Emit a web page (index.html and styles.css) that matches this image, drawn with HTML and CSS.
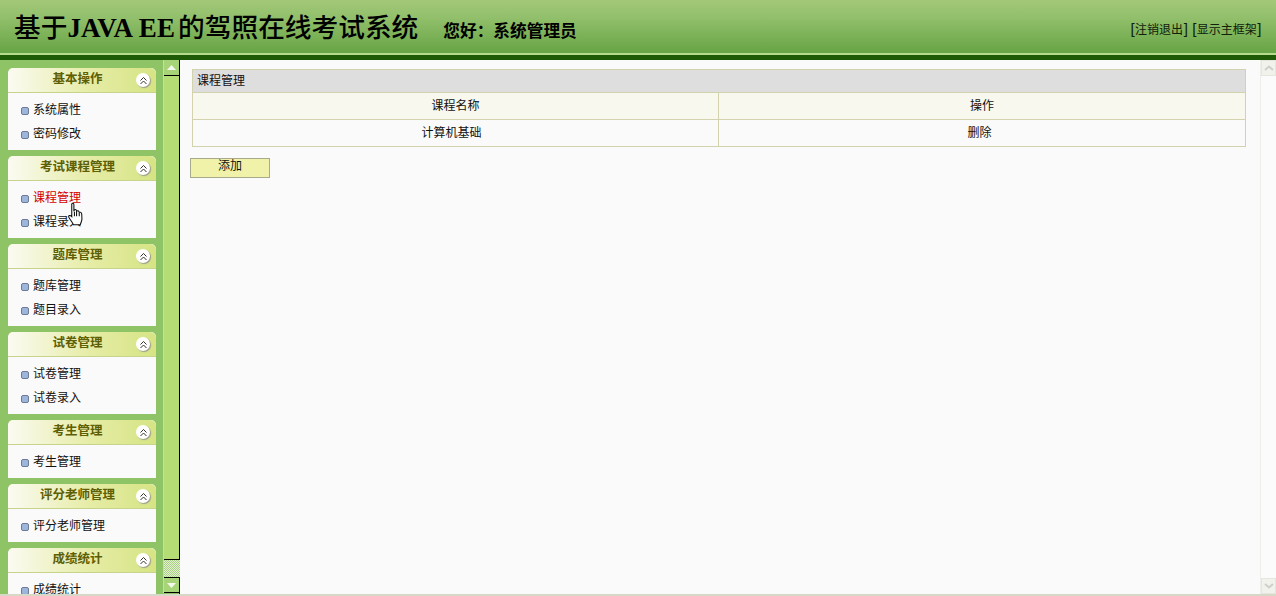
FILE: index.html
```html
<!DOCTYPE html>
<html lang="zh-CN">
<head>
    <meta charset="UTF-8">
    <title>基于JAVA EE的驾照在线考试系统</title>
    <link rel="stylesheet" href="styles.css">
</head>
<body>
    <div class="header">
        <div class="title">基于<span class="title-latin">JAVA EE</span>的驾照在线考试系统</div>
        <div class="welcome">您好：系统管理员</div>
        <div class="top-links"><span class="bracket">[</span>注销退出<span class="bracket">]</span> <span class="bracket">[</span>显示主框架<span class="bracket">]</span></div>
    </div>
    <div class="page">
        <div class="sidebar">
            <div class="menu">
                <div class="panel">
                    <div class="panel-head"><span class="panel-title">基本操作</span><span class="toggle"><svg width="9" height="9" viewBox="0 0 9 9"><path d="M1.5 4.5 4.5 1.5 7.5 4.5M1.5 8 4.5 5 7.5 8" fill="none" stroke="#333" stroke-width="1"/></svg></span></div>
                    <div class="panel-body">
                        <div class="item">系统属性</div>
                        <div class="item">密码修改</div>
                    </div>
                </div>
                <div class="panel">
                    <div class="panel-head"><span class="panel-title">考试课程管理</span><span class="toggle"><svg width="9" height="9" viewBox="0 0 9 9"><path d="M1.5 4.5 4.5 1.5 7.5 4.5M1.5 8 4.5 5 7.5 8" fill="none" stroke="#333" stroke-width="1"/></svg></span></div>
                    <div class="panel-body">
                        <div class="item active">课程管理</div>
                        <div class="item">课程录入</div>
                    </div>
                </div>
                <div class="panel">
                    <div class="panel-head"><span class="panel-title">题库管理</span><span class="toggle"><svg width="9" height="9" viewBox="0 0 9 9"><path d="M1.5 4.5 4.5 1.5 7.5 4.5M1.5 8 4.5 5 7.5 8" fill="none" stroke="#333" stroke-width="1"/></svg></span></div>
                    <div class="panel-body">
                        <div class="item">题库管理</div>
                        <div class="item">题目录入</div>
                    </div>
                </div>
                <div class="panel">
                    <div class="panel-head"><span class="panel-title">试卷管理</span><span class="toggle"><svg width="9" height="9" viewBox="0 0 9 9"><path d="M1.5 4.5 4.5 1.5 7.5 4.5M1.5 8 4.5 5 7.5 8" fill="none" stroke="#333" stroke-width="1"/></svg></span></div>
                    <div class="panel-body">
                        <div class="item">试卷管理</div>
                        <div class="item">试卷录入</div>
                    </div>
                </div>
                <div class="panel">
                    <div class="panel-head"><span class="panel-title">考生管理</span><span class="toggle"><svg width="9" height="9" viewBox="0 0 9 9"><path d="M1.5 4.5 4.5 1.5 7.5 4.5M1.5 8 4.5 5 7.5 8" fill="none" stroke="#333" stroke-width="1"/></svg></span></div>
                    <div class="panel-body">
                        <div class="item">考生管理</div>
                    </div>
                </div>
                <div class="panel">
                    <div class="panel-head"><span class="panel-title">评分老师管理</span><span class="toggle"><svg width="9" height="9" viewBox="0 0 9 9"><path d="M1.5 4.5 4.5 1.5 7.5 4.5M1.5 8 4.5 5 7.5 8" fill="none" stroke="#333" stroke-width="1"/></svg></span></div>
                    <div class="panel-body">
                        <div class="item">评分老师管理</div>
                    </div>
                </div>
                <div class="panel">
                    <div class="panel-head"><span class="panel-title">成绩统计</span><span class="toggle"><svg width="9" height="9" viewBox="0 0 9 9"><path d="M1.5 4.5 4.5 1.5 7.5 4.5M1.5 8 4.5 5 7.5 8" fill="none" stroke="#333" stroke-width="1"/></svg></span></div>
                    <div class="panel-body">
                        <div class="item">成绩统计</div>
                    </div>
                </div>
            </div>
            <div class="side-scroll">
                <div class="side-btn"><svg width="9" height="5" viewBox="0 0 9 5"><path d="M4.5 0 9 5H0z" fill="#f4f8ee"/></svg></div>
                <div class="side-thumb"></div>
                <div class="side-track"></div>
                <div class="side-btn side-btn-down"><svg width="9" height="5" viewBox="0 0 9 5"><path d="M0 0H9L4.5 5z" fill="#f4f8ee"/></svg></div>
            </div>
            <svg class="hand" width="15" height="24" viewBox="0 0 14 22"><path d="M3.5 1.500C4.500.5 5.500 1 5.500 2.500V8.500L6 7C7.500 6.500 8 7.500 8 8.500 9 7.500 10 8 10.500 9.500 11.500 9 12.500 9.500 12.800 11L13 15.500C13 17.500 12 19 11.500 21H5C4.500 19 2 16.500 .8 14 .3 12.500 1.500 11.500 3.500 13.500z" fill="#fff" stroke="#111" stroke-width="1"/><path d="M6 9V13M8 9V13M10.500 10V13" fill="none" stroke="#111" stroke-width="1"/></svg>
        </div>
        <div class="main">
            <div class="content">
                <table class="grid">
                    <colgroup><col class="col-name"><col></colgroup>
                    <tr><td class="grid-title" colspan="2">课程管理</td></tr>
                    <tr class="grid-head"><td>课程名称</td><td>操作</td></tr>
                    <tr class="grid-row"><td class="row-name">计算机基础</td><td class="row-action">删除</td></tr>
                </table>
                <button class="add-btn">添加</button>
            </div>
            <div class="main-scroll">
                <div class="main-btn"><svg width="10" height="6" viewBox="0 0 10 6"><path d="M1 5 5 1.500 9 5" fill="none" stroke="#d0d0c8" stroke-width="2"/></svg></div>
                <div class="main-btn"><svg width="10" height="6" viewBox="0 0 10 6"><path d="M1 1 5 4.500 9 1" fill="none" stroke="#d0d0c8" stroke-width="2"/></svg></div>
            </div>
        </div>
    </div>
</body>
</html>
```

FILE: styles.css
```css
* {
    box-sizing: border-box;
}

html, body {
    height: 100%;
}

body {
    margin: 0;
    display: flex;
    flex-direction: column;
    overflow: hidden;
    background-color: #fafafa;
    color: #111;
    font-family: "Liberation Sans", "Noto Sans CJK SC", sans-serif;
    font-size: 12px;
}

/* top banner */
.header {
    flex: none;
    display: flex;
    align-items: center;
    height: 60px;
    padding: 0 14px 3px;
    background: linear-gradient(#a3c878, #93c06c 30%, #6aa648 92%);
    border-bottom: 5px solid #1f5a06;
    box-shadow: inset 0 -2px 0 #b5dc8c;
    color: #000;
}

.title {
    margin-top: 4px;
    font-family: "Liberation Serif", "Noto Sans CJK SC", serif;
    font-size: 26.700px;
    font-weight: 500;
    line-height: 32px;
}

.title-latin {
    padding-right: 3px;
    font-size: 27px;
    font-weight: 700;
    letter-spacing: .2px;
}

.welcome {
    margin-left: 25px;
    margin-top: 8px;
    font-size: 16.700px;
    font-weight: 700;
}

.top-links {
    margin-left: auto;
    margin-top: 4px;
    color: #10200a;
    font-size: 12px;
    white-space: nowrap;
}

.bracket {
    padding: 0 .5px;
    font-size: 15px;
    line-height: 12px;
}

.page {
    flex: 1;
    display: flex;
    min-height: 0;
    border-bottom: 2px solid #d8d8c8;
}

/* left menu */
.sidebar {
    position: relative;
    flex: none;
    display: flex;
    width: 180px;
    background-color: #8fc466;
    border-right: 1px solid #000;
}

.menu {
    flex: 1;
    overflow: hidden;
    padding: 8px 7px 0 8px;
}

.panel {
    margin-bottom: 6px;
    border-radius: 5px 5px 0 0;
    background-color: #fafafa;
}

.panel-head {
    position: relative;
    height: 25px;
    padding-right: 9px;
    border-radius: 6px 6px 0 0;
    border-bottom: 1px solid #c6d48e;
    background: linear-gradient(90deg, #fbfbf2, #e6eca6 55%, #d6e484);
    line-height: 22px;
    text-align: center;
}

.panel-title {
    color: #5e5e04;
    font-size: 12.500px;
    font-weight: 700;
}

.toggle {
    position: absolute;
    top: 5px;
    right: 6px;
    display: flex;
    align-items: center;
    justify-content: center;
    width: 14px;
    height: 14px;
    border-radius: 50%;
    background-color: #fff;
    box-shadow: 1px 1px 1px #9a9a8a;
}

.panel-body {
    padding: 5px 0 4px 13px;
}

.item {
    position: relative;
    height: 24px;
    padding-left: 12px;
    line-height: 24px;
}

.item::before {
    content: "";
    position: absolute;
    left: 0;
    top: 9px;
    width: 6px;
    height: 6px;
    border: 1px solid #6d7c92;
    border-radius: 2px;
    background-color: #9db4dc;
}

.item.active {
    color: #d40000;
}

.hand {
    position: absolute;
    left: 68px;
    top: 142px;
}

/* scrollbar of the menu frame */
.side-scroll {
    flex: none;
    display: flex;
    flex-direction: column;
    width: 16px;
    height: 533px;
    border-left: 1px solid #c4e296;
}

.side-btn {
    flex: none;
    display: flex;
    align-items: center;
    justify-content: center;
    height: 16px;
    background-color: #a8d478;
    border-bottom: 1px solid #000;
}

.side-btn-down {
    border-top: 1px solid #000;
}

.side-thumb {
    flex: 1;
    background-color: #b4dd76;
    border-bottom: 1px solid #000;
}

.side-track {
    flex: none;
    height: 17px;
    margin-right: -1px;
    background-color: #c3dfa3;
    background-image: conic-gradient(#e2f0d0 25%, #a9d084 0 50%, #e2f0d0 0 75%, #a9d084 0);
    background-size: 2px 2px;
}

/* right frame */
.main {
    flex: 1;
    display: flex;
    min-width: 0;
}

.content {
    flex: 1;
    min-width: 0;
    padding: 9px 14px 0 10px;
}

.grid {
    width: 1054px;
    margin-left: 2px;
    border-collapse: separate;
    border-spacing: 0;
    table-layout: fixed;
    border-left: 1px solid #d2d2ae;
    border-top: 1px solid #d2d2ae;
    font-size: 12px;
}

.grid td {
    padding: 0 0 3px;
    border-right: 1px solid #d2d2ae;
    border-bottom: 1px solid #d2d2ae;
    text-align: center;
}

.grid .grid-title {
    height: 23px;
    padding-left: 4px;
    background-color: #dedede;
    text-align: left;
}

.grid-head td {
    height: 27px;
    background-color: #f8f8ee;
}

.grid-row td {
    height: 27px;
    background-color: #fafafa;
}

.col-name {
    width: 526px;
}

.grid .row-name {
    padding-right: 8px;
}

.grid .row-action {
    padding-right: 5px;
}

.add-btn {
    display: block;
    width: 80px;
    height: 20px;
    margin-top: 11px;
    padding: 0 0 5px;
    border: 1px solid #a9a98c;
    background-color: #f0f2aa;
    color: #111;
    font-family: inherit;
    font-size: 12px;
    line-height: 14px;
}

/* scrollbar of the main frame */
.main-scroll {
    flex: none;
    display: flex;
    flex-direction: column;
    justify-content: space-between;
    width: 16px;
    border-left: 1px solid #eeeeea;
    background-color: #fbfbfb;
}

.main-btn {
    display: flex;
    align-items: center;
    justify-content: center;
    height: 16px;
    background-color: #f2f2ec;
    border: 1px solid #e6e6de;
}
```
